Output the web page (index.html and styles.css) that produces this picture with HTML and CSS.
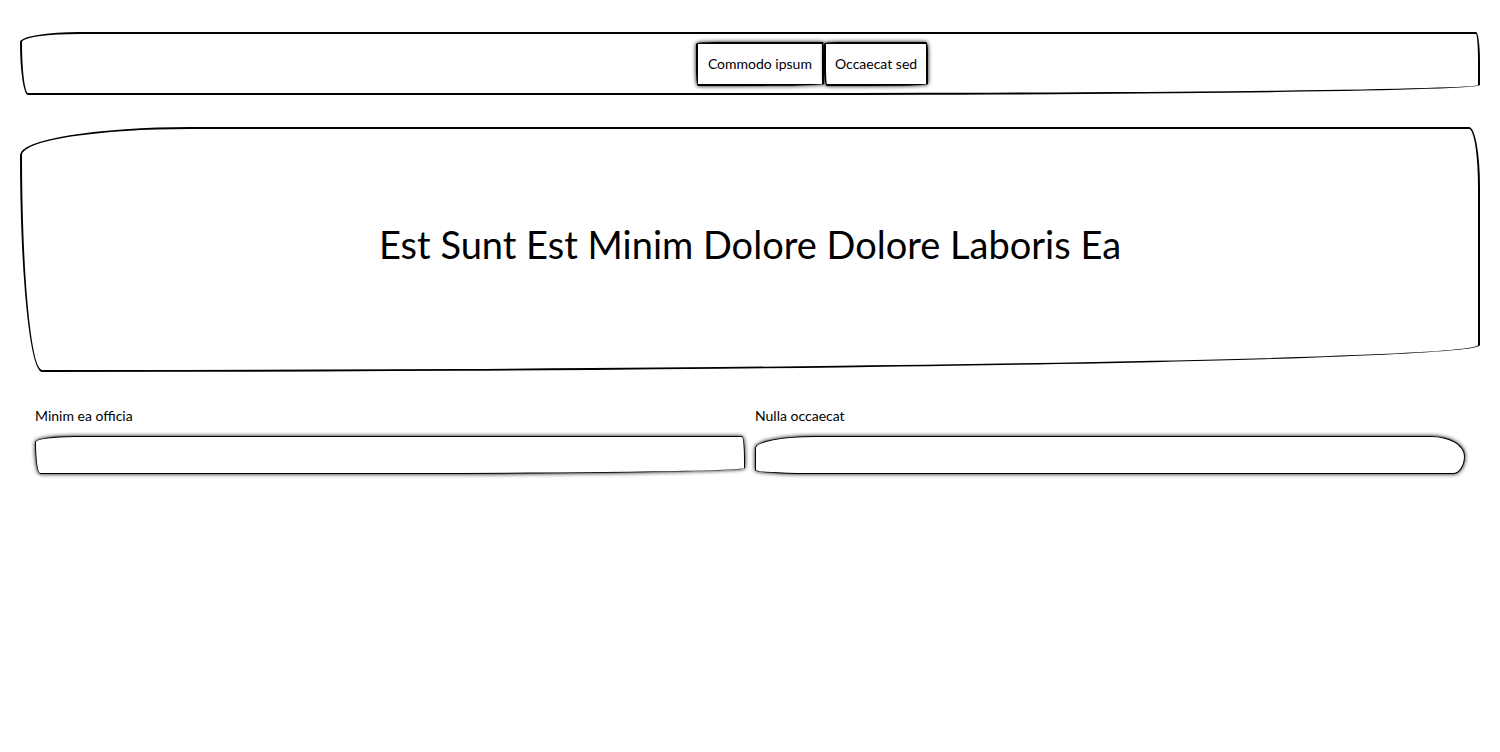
FILE: index.html
```html
<!DOCTYPE html>
<html lang="en">
<head>
<meta charset="utf-8">
<title>Est Sunt Est Minim</title>
<link rel="stylesheet" href="styles.css">
</head>
<body>
<nav class="navbar">
<button class="nav-button nav-button-first" type="button">Commodo ipsum</button>
<button class="nav-button nav-button-second" type="button">Occaecat sed</button>
</nav>
<header class="hero">
<h1 class="hero-title">Est Sunt Est Minim Dolore Dolore Laboris Ea</h1>
</header>
<form class="fields">
<div class="field">
<label for="first">Minim ea officia</label>
<input class="input input-first" id="first" type="text">
</div>
<div class="field">
<label for="second">Nulla occaecat</label>
<input class="input input-second" id="second" type="text">
</div>
</form>
</body>
</html>
```
FILE: styles.css
```css
* {
  box-sizing: border-box;
}

body {
  display: flex;
  flex-direction: column;
  gap: 32px;
  margin: 0;
  padding: 32px 20px;
  background: #fff;
  color: #000;
  font-family: Lato, sans-serif;
  font-size: 14px;
  line-height: 23px;
}

.navbar {
  display: flex;
  justify-content: center;
  padding: 8px 0 7px 124px;
  border: 2px solid #000;
  border-radius: 60px 4px 690px 8px / 10px 30px 10px 53px;
}

.nav-button {
  padding: 8px;
  border: 2px solid #000;
  background: #fff;
  box-shadow: 0 0 4px #000;
  color: #000;
  font: inherit;
}

.nav-button {
  padding: 8px 9px 9px;
}

.nav-button-first {
  padding: 8px 10px 9px;
  border-radius: 20px 1px 90px 2px / 2px 20px 2px 20px;
}

.nav-button-second {
  border-radius: 14px 2px 60px 3px / 2px 10px 2px 20px;
}

.hero {
  padding: 87px 20px 97px;
  border: 2px solid #000;
  border-radius: 170px 11px 1438px 22px / 28px 60px 27px 217px;
  text-align: center;
}

.hero-title {
  margin: 0;
  font-size: 38px;
  font-weight: 400;
  line-height: 57px;
}

.fields {
  display: flex;
  gap: 10px;
  padding: 0 15px;
}

.field {
  display: flex;
  flex: 1;
  flex-direction: column;
  gap: 9px;
}

.input {
  width: 100%;
  height: 38px;
  padding: 8px;
  border: 1px solid #000;
  background: #fff;
  box-shadow: 0 0 4px #000;
  font: inherit;
}

.input-first {
  border-radius: 40px 3px 350px 5px / 6px 24px 6px 32px;
}

.input-second {
  border-radius: 60px 34px 12px 52px / 12px 20px 18px 4px;
}
```
